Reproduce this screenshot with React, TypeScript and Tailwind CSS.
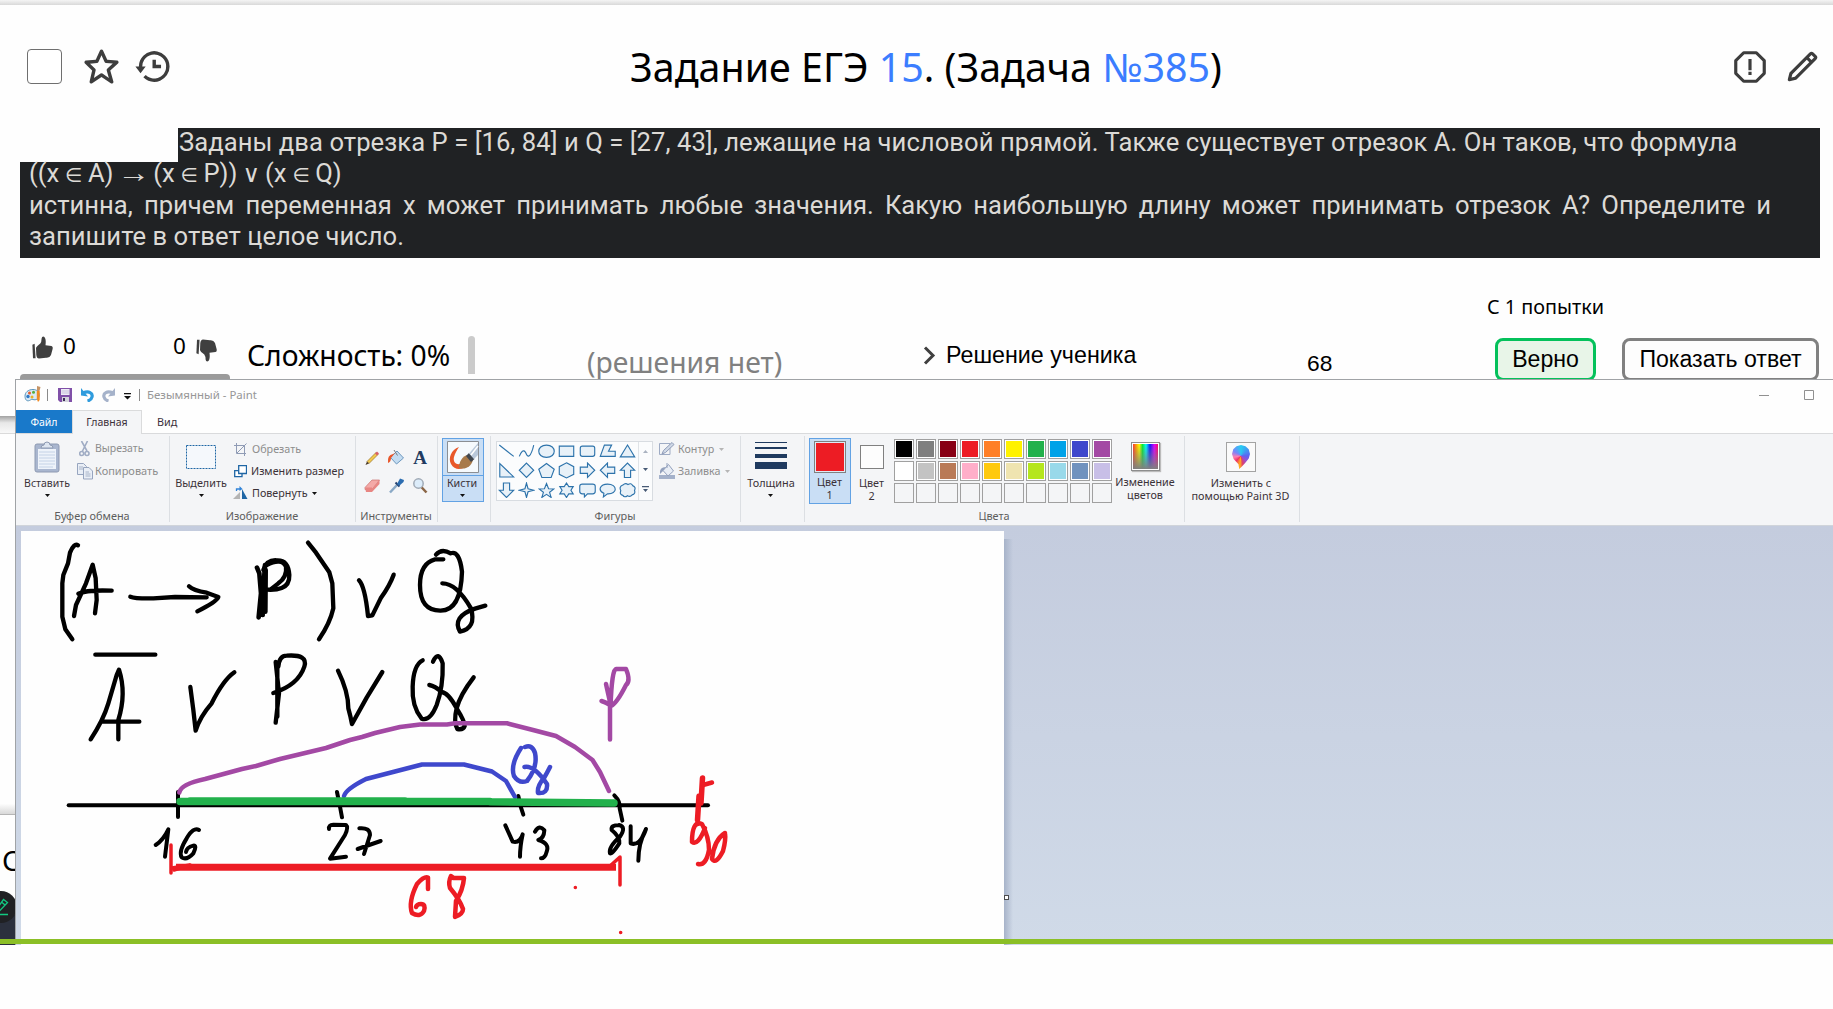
import type { ReactNode } from "react";
import { BiErrorAlt, BiHistory, BiPencil, BiStar } from "react-icons/bi";

const PALETTE = [
  "bg-[#000000]", "bg-[#7f7f7f]", "bg-[#880015]", "bg-[#ed1c24]", "bg-[#ff7f27]",
  "bg-[#fff200]", "bg-[#22b14c]", "bg-[#00a2e8]", "bg-[#3f48cc]", "bg-[#a349a4]",
  "bg-[#ffffff]", "bg-[#c3c3c3]", "bg-[#b97a57]", "bg-[#ffaec9]", "bg-[#ffc90e]",
  "bg-[#efe4b0]", "bg-[#b5e61d]", "bg-[#99d9ea]", "bg-[#7092be]", "bg-[#c8bfe7]",
  "", "", "", "", "", "", "", "", "", "",
];

const SHAPES = [
  "M1 2 L15 13",
  "M1 13 C3 8 5 6 7 9 C9 14 11 15 14 6 L15 2",
  "M8 2 C13 2 15.500 5 15.500 8 C15.500 11 13 14 8 14 C3 14 .5 11 .5 8 C.5 5 3 2 8 2Z",
  "M1 3 H15 V13 H1Z",
  "M3 3 H13 Q15 3 15 5 V11 Q15 13 13 13 H3 Q1 13 1 11 V5 Q1 3 3 3Z",
  "M5 2 H12 L9 8 H15.500 V13 H1Z",
  "M8 2 L15 13.500 H1Z",
  "M1.500 1.500 V14.500 H15Z",
  "M8 1 L15 8 L8 15 L1 8Z",
  "M8 1.500 L15.500 7 L12.500 15 H3.500 L.5 7Z",
  "M8 .8 L15 4.500 V12 L8 15.500 L1 12 V4.500Z",
  "M1 5 H8 V1 L15 8 L8 15 V11 H1Z",
  "M15 5 H8 V1 L1 8 L8 15 V11 H15Z",
  "M5 15 V8 H1 L8 1 L15 8 H11 V15Z",
  "M5 1 V8 H1 L8 15 L15 8 H11 V1Z",
  "M8 1 L9.500 6.500 L15 8 L9.500 9.500 L8 15 L6.500 9.500 L1 8 L6.500 6.500Z",
  "M8 1.500 L10 6.500 L15.200 6.700 L11 10 L12.500 15 L8 12 L3.500 15 L5 10 L.8 6.700 L6 6.500Z",
  "M8 1 L10.200 4.500 H14.500 L12.300 8 L14.500 11.500 H10.200 L8 15 L5.800 11.500 H1.500 L3.700 8 L1.500 4.500 H5.800Z",
  "M3 2 H13 Q15.500 2 15.500 4 V9 Q15.500 11.500 13 11.500 H8 L5 14.500 V11.500 H3 Q.5 11.500 .5 9 V4 Q.5 2 3 2Z",
  "M8 2 C18 2 18 12 8 11.500 L4 14.500 L4.500 11 C-2 8 1 2 8 2Z",
  "M3.500 3 Q6 .5 8.500 2.500 Q11.500 .5 13 3.500 Q16.500 5 14.800 8 Q16 11.500 12.500 12.500 Q10.500 15 8 13.300 Q5 15.500 3.500 13 Q0 12 1.500 8.500 Q-.5 4.500 3.500 3Z",
];

function Caret({ className = "text-[#111]" }: { className?: string }) {
  return (
    <svg className={className} width="5" height="3" viewBox="0 0 5 3" fill="currentColor">
      <path d="M0 0H5L2.500 3Z" />
    </svg>
  );
}

function Group({ width, label, children }: { width: string; label?: string; children: ReactNode }) {
  return (
    <section className={`${width} relative flex h-[91px] shrink-0 flex-col justify-between`}>
      <div className="flex items-start">{children}</div>
      <div className="h-[17px] pr-[2px] text-center text-[10.9px] leading-[16px] text-[#5d5d5d]">{label}</div>
      <div className="absolute top-[2px] right-0 h-[86px] w-px bg-[#dcdfe3]" />
    </section>
  );
}

function Thumb({ className }: { className?: string }) {
  return (
    <svg className={className} width="21" height="23" viewBox="0 0 21 23" fill="#3f3f3f">
      <path d="M.4 8.800 L2.600 7.700 L3.600 22.300 L1 22.300Z" />
      <path d="M4.300 19 L4 12 Q4.200 10.500 8.300 7.500 Q9.500 6 9.600 2.500 Q9.800 .6 11.300 .5 Q14.500 1.300 13.500 9.200 L19.500 10 Q21.200 10.500 20.600 13 L19 19 Q17.500 22.300 14 21.800 L7 22.500 Q4.800 22.500 4.300 19Z" />
    </svg>
  );
}

function El() {
  return <span className="inline-block w-[16px] text-center font-['DejaVu_Sans'] text-[20px] leading-[0px]"><span className="-mx-1">∈</span></span>;
}

function Header() {
  return (
    <header className="mt-[41px] flex h-[41px] items-center">
      <div className="ml-[27px] h-[35px] w-[35px] rounded-[4px] border border-[#6f6f6f] bg-white" />
      <BiStar className="ml-[19px] h-[41px] w-[41px] text-[#3d3d3d]" />
      <BiHistory className="ml-[10px] h-[41px] w-[41px] text-[#3d3d3d]" />
      <h1 className="mt-[1px] ml-[457px] w-[600px] font-['Noto_Sans',sans-serif] text-[39.4px] leading-[41px] whitespace-nowrap text-black">
        Задание ЕГЭ <span className="text-[#3b7dff]">15</span>. (Задача <span className="text-[#3b7dff]">№385</span>)
      </h1>
      <BiErrorAlt className="ml-[501px] h-[38px] w-[38px] text-[#3d3d3d]" />
      <BiPencil className="ml-[14px] h-[38px] w-[38px] text-[#3d3d3d]" />
    </header>
  );
}

function Problem() {
  return (
    <div className="mt-[41px] ml-[20px] h-[130px] w-[1800px] font-['Roboto',sans-serif] text-[25.6px] text-[#dcdad6]">
      <p className="ml-[158px] h-[34px] bg-[#202224] pl-px leading-[29px] tracking-[0.055px] whitespace-nowrap">
        Заданы два отрезка P = [16, 84] и Q = [27, 43], лежащие на числовой прямой. Также существует отрезок A. Он таков, что формула
      </p>
      <div className="h-[96px] bg-[#202224] pl-[9px]">
        <p className="mb-[3px] h-[25px] leading-[23px] whitespace-nowrap">
          ((x <El /> A){" "}
          <span className="inline-block w-[27px] origin-center scale-x-[1.22] text-center font-['Liberation_Sans'] text-[27px] leading-[0px]">→</span> (x <El /> P)){" "}
          <span className="inline-block w-[15px] text-center font-['DejaVu_Sans'] text-[24px] leading-[0px]"><span className="-mx-1">∨</span></span> (x <El /> Q)
        </p>
        <p className="w-[1742px] text-justify leading-[31.2px] [text-align-last:justify]">
          истинна, причем переменная x может принимать любые значения. Какую наибольшую длину может принимать отрезок A? Определите и
        </p>
        <p className="leading-[31.2px] tracking-[0.04px] whitespace-nowrap">запишите в ответ целое число.</p>
      </div>
    </div>
  );
}

function AnswerRow() {
  return (
    <div className="flex h-[122px] items-start whitespace-nowrap text-black">
      <div className="mt-[77px] ml-[20px] flex h-[45px] w-[210px] flex-col justify-between font-['Noto_Sans',sans-serif] text-[22.500px]">
        <div className="flex h-[27px] items-start">
          <Thumb className="mt-px ml-[12px]" />
          <span className="ml-[10px] w-[13px] leading-[22px]">0</span>
          <span className="ml-[97px] w-[13px] leading-[22px]">0</span>
          <Thumb className="mt-[4px] ml-[10px] -scale-y-100" />
        </div>
        <div className="h-[6px] rounded-t-[4px] bg-[#9b9b9b]" />
      </div>
      <div className="mt-[75px] ml-[17px] w-[221px] font-['Noto_Sans',sans-serif] text-[28.250px] leading-[44px]">Сложность: 0%</div>
      <div className="mt-[78px] h-[38px] w-[7px] rounded-t-[4px] bg-[#cbcbcb]" />
      <div className="mt-[82px] ml-[112px] w-[199px] font-['Noto_Sans',sans-serif] text-[28.300px] leading-[44px] text-[#808080]">(решения нет)</div>
      <svg className="mt-[88px] ml-[137px]" width="13" height="19" viewBox="0 0 13 19" fill="none" stroke="#3f3f3f" strokeWidth="3">
        <path d="M2 1.500 L10 9.500 L2 17.500" />
      </svg>
      <div className="mt-[85px] ml-[10px] w-[200px] font-['Liberation_Sans',sans-serif] text-[23.250px] leading-[24px]">Решение ученика</div>
      <div className="mt-[93px] ml-[161px] w-[30px] font-['Liberation_Sans',sans-serif] text-[22.800px] leading-[24px]">68</div>
      <div className="ml-[149px]">
        <div className="mt-[35px] ml-px font-['Noto_Sans',sans-serif] text-[19.800px] leading-[27px]">С 1 попытки</div>
        <div className="mt-[18px] ml-[9px] flex h-[43px] font-['Liberation_Sans',sans-serif] text-[23.100px] leading-[37px]">
          <div className="w-[101px] rounded-[8px] border-[3px] border-[#04c15b] bg-[#e8f5e8] text-center">Верно</div>
          <div className="ml-[26px] w-[197px] rounded-[8px] border-[3px] border-[#808080] bg-[#fdfdfd] text-center">Показать ответ</div>
        </div>
      </div>
    </div>
  );
}

function PageEdge() {
  return (
    <div className="mt-[36px] flex h-[529px] w-[16px] flex-col">
      <div className="h-[18px] shrink-0 border-b border-[#dadada] bg-linear-to-b from-[#a2a2a2] via-[#e8e8e8] via-40% to-[#f8f8f8]" />
      <div className="mt-[370px] h-[11px] shrink-0 border-b border-[#b5b5b5] bg-linear-to-b from-[#fdfdfd] to-[#d8d8d8]" />
      <div className="mt-[26px] h-[38px] shrink-0 overflow-hidden pl-[2px] font-['Noto_Sans',sans-serif] text-[28px] leading-[38px]">С</div>
      <div className="relative mt-[12px] h-[54px] shrink-0 overflow-hidden">
        <div className="mt-[24px] h-[30px] bg-[#2b303d]" />
        <svg className="absolute top-0 left-0" width="17" height="32" viewBox="0 0 17 32" fill="none">
          <circle cx="1" cy="16" r="16" fill="#202124" />
          <path d="M-4 19 L3.500 8.500 L7.500 11.500 L0 19.500 L-4 20 M1.500 11 L5 14 M-6 23.500 H8" stroke="#12c981" strokeWidth="1.300" />
        </svg>
      </div>
    </div>
  );
}

function TitleBar() {
  return (
    <div className="flex h-[30px] items-center pr-[19px]">
      <svg className="ml-[8px]" width="18" height="18" viewBox="0 0 18 18">
        <path d="M9 3.500 C4 3.500 .8 6.500 1 10.500 C1.200 14 3 15.500 5.500 14.500 C7 13.800 7.500 12.800 9 13.500 C11.500 14.500 15.500 13 15.300 8.800 C15.200 5.500 12.500 3.500 9 3.500Z" fill="#d9eaf5" stroke="#5a94bc" />
        <circle cx="4" cy="10.500" r="1.700" fill="#3079c5" /><circle cx="5.500" cy="7" r="1.500" fill="#e85b2c" /><circle cx="9.500" cy="6.300" r="1.500" fill="#59ad3d" /><circle cx="8" cy="11" r="1.500" fill="#e9b327" />
        <path d="M13 0 L16.500 1 L15.500 5 H13Z" fill="#c59466" /><path d="M12.800 5 H15.700 V14 L14 16 L12.800 13Z" fill="#f18a22" />
      </svg>
      <div className="ml-[5px] h-[12px] w-px bg-[#8a8a8a]" />
      <svg className="ml-[10px]" width="14" height="14" viewBox="0 0 14 14">
        <path d="M0 0H14V14H2L0 12Z" fill="#8050a8" /><path d="M3 1H11.500V7H3Z" fill="#eeecf6" /><path d="M3.500 3H11M3.500 5H11" stroke="#b8b3cf" strokeWidth=".7" /><path d="M4 9H11V14H4Z" fill="#d4d4dc" /><path d="M5 10H7V13H5Z" fill="#3c2c58" />
      </svg>
      <svg className="ml-[9px]" width="13" height="14" viewBox="0 0 13 14" fill="none">
        <path d="M2 5 C8 2.500 12 5 11 9 C10.500 11.500 9 12.300 6.500 13" stroke="#2e9bdd" strokeWidth="3.200" /><path d="M0 0 L7 8.500 L0 7.500Z" fill="#2e9bdd" />
      </svg>
      <svg className="ml-[8px]" width="13" height="14" viewBox="0 0 13 14" fill="none">
        <path d="M11 5 C5 2.500 1 5 2 9 C2.500 11.500 4 12.300 6.500 13" stroke="#a5b2ca" strokeWidth="3.200" /><path d="M13 0 L6 8.500 L13 7.500Z" fill="#a5b2ca" />
      </svg>
      <svg className="mt-[3px] ml-[9px]" width="7" height="7" viewBox="0 0 7 7"><path d="M0 0H7V1.200H0ZM0 3H7L3.500 6.500Z" fill="#111" /></svg>
      <div className="ml-[8px] h-[12px] w-px bg-[#8a8a8a]" />
      <div className="ml-[7px] text-[11.450px] leading-[16px] whitespace-nowrap text-[#979797]">Безымянный - Paint</div>
      <svg className="ml-auto" width="55" height="10" viewBox="0 0 55 10" fill="none" stroke="#909090">
        <path d="M0 5.500H10M45.500 .5H54.500V9.500H45.500Z" />
      </svg>
    </div>
  );
}

function Tabs() {
  return (
    <div className="flex h-[24px] items-stretch text-[10.500px] leading-[24px]">
      <div className="w-[56px] border-b border-[#d9dadc] bg-[#1979ca] text-center text-white">Файл</div>
      <div className="w-[70px] border-x border-t border-[#dadbdc] bg-[#f4f5f7] text-center leading-[23px] text-[#3b2f3a]">Главная</div>
      <div className="grow border-b border-[#d9dadc] pl-[15px] text-[10.800px] text-[#3b2f3a]">Вид</div>
    </div>
  );
}

function ClipboardGroup() {
  return (
    <Group width="w-[154px]" label="Буфер обмена">
      <div className="mt-[7px] flex w-[62px] flex-col items-center">
        <svg width="26" height="32" viewBox="0 0 26 32">
          <rect x="1" y="3" width="24" height="28" rx="2" fill="#a9b6cf" stroke="#8e9ab2" />
          <path d="M4 8 H22 V28 H4Z" fill="#eef3fa" /><path d="M5 11H21M5 14H21M5 17H21M5 20H21M5 23H21M5 26H19" stroke="#c4d2e6" />
          <path d="M7 7 Q7 4 10 4 Q10 1 13 1 Q16 1 16 4 Q19 4 19 7Z" fill="#dde5f0" stroke="#8e9ab2" />
        </svg>
        <span className="mt-[2px] text-[10.500px] leading-[16px]">Вставить</span>
        <div className="mt-[3px]"><Caret /></div>
      </div>
      <div className="mt-[6px] ml-[-4px] flex flex-col gap-[4px] text-[#8d8d8d]">
        <div className="flex h-[18px] items-center">
          <svg className="ml-[5px]" width="12" height="16" viewBox="0 0 12 16" fill="none" stroke="#a0acc4" strokeWidth="1.600"><path d="M2.500 0 L8 10 M8.500 0 L3.500 10" /><circle cx="2.700" cy="12.500" r="2" /><circle cx="8" cy="12.500" r="2" /></svg>
          <span className="ml-[4px] text-[10.500px]">Вырезать</span>
        </div>
        <div className="flex h-[18px] items-center">
          <svg className="ml-[3px]" width="16" height="17" viewBox="0 0 16 17" fill="#e9eef6" stroke="#97a5bf"><path d="M.5 .5H6.500L9.500 3.500V11.500H.5Z" /><path d="M6.500 4.500H12L15.500 8V16H6.500Z" /><path d="M2 4H6M2 6H6M8.500 9H12M8.500 11H13.500M8.500 13H13.500" strokeWidth=".8" /></svg>
          <span className="ml-[2px] text-[11px]">Копировать</span>
        </div>
      </div>
    </Group>
  );
}

function ImageGroup() {
  return (
    <Group width="w-[186px]" label="Изображение">
      <div className="mt-[11px] flex w-[62px] flex-col items-center">
        <svg width="30" height="24" viewBox="0 0 30 24"><path d="M.5 .5H29.500V23.500H.5Z" fill="#f5f8fc" stroke="#1f66a5" strokeDasharray="2 1" /></svg>
        <span className="mt-[6px] text-[10.800px] leading-[16px]">Выделить</span>
        <div className="mt-[3px]"><Caret /></div>
      </div>
      <div className="mt-[6px] flex flex-col gap-[4px] text-[10.750px]">
        <div className="flex h-[18px] items-center text-[#8d8d8d]">
          <svg className="ml-[2px]" width="13" height="13" viewBox="0 0 13 13" fill="none" stroke="#8f9bb5"><path d="M2.500 0V10.500H12M0 2.500H10.500V13M3 10L12.500 .5" /></svg>
          <span className="ml-[5px]">Обрезать</span>
        </div>
        <div className="flex h-[18px] items-center">
          <svg className="ml-[2px]" width="13" height="13" viewBox="0 0 13 13" fill="#fff" stroke="#1f66a5" strokeWidth="1.300"><path d="M.7 5.700H8V11.700H.7Z" /><path d="M4.700 .7H12.500V8.500H4.700Z" /></svg>
          <span className="ml-[4px]">Изменить размер</span>
        </div>
        <div className="flex h-[18px] items-center">
          <svg className="ml-px" width="15" height="14" viewBox="0 0 15 14"><path d="M0 13 L7 6 V13Z" fill="#b4b4b4" /><path d="M9 13 V3 L14.500 13Z" fill="#1f66a5" /><path d="M3.500 5 V3 H7" fill="none" stroke="#2f82d8" strokeWidth="1.300" /><path d="M6.500 0 L9.500 3 L6.500 5Z" fill="#2f82d8" /></svg>
          <span className="ml-[4px]">Повернуть</span>
          <div className="ml-[4px]"><Caret /></div>
        </div>
      </div>
    </Group>
  );
}

function ToolsGroup() {
  return (
    <Group width="w-[82px]" label="Инструменты">
      <div className="mt-[15px] ml-[7px] grid grid-cols-3 gap-x-[6px] gap-y-[10px]">
        <svg width="18" height="18" viewBox="0 0 18 18"><path d="M4 12.500 L13 3.500 L15 5.500 L6 14.500Z" fill="#f2c94c" stroke="#9a7230" strokeWidth=".7" /><path d="M12 4.500 L14 2.500 L16 4.500 L14 6.500Z" fill="#d9606a" /><path d="M2.500 16 L4 12.500 L6 14.500Z" fill="#4a3a28" /></svg>
        <svg width="18" height="18" viewBox="0 0 18 18"><path d="M3.500 8.500 L10 2 L16.500 9 L9.500 15Z" fill="#c4dcf1" stroke="#6e98bf" /><path d="M7 1 L10.500 6.500" stroke="#777" /><path d="M1 14 Q0 6 6 5 L8 4 L4 9 Q4 13 1 14Z" fill="#e8562a" /></svg>
        <div className="text-center font-['Liberation_Serif',serif] text-[19px] leading-[18px] font-bold text-[#213a60]">A</div>
        <svg width="18" height="18" viewBox="0 0 18 18"><path d="M2 10.500 L9 3 H16.500 L9 12.500 H2Z" fill="#f4a9a7" stroke="#c9706e" strokeWidth=".7" /><path d="M2 10.500 H9 V15 H3Z M9 12 L16.500 3 V7 L9 15Z" fill="#e88683" /></svg>
        <svg width="18" height="18" viewBox="0 0 18 18"><path d="M3 15.500 L10 8" stroke="#8aa9c6" strokeWidth="2.500" /><path d="M8.500 5.500 L12.500 9.500" stroke="#233f6c" strokeWidth="2" /><path d="M10 7 L13 1.500 L17 3 L16.500 5 L12 9Z" fill="#2b6cb0" /></svg>
        <svg width="18" height="18" viewBox="0 0 18 18"><circle cx="7.500" cy="6.500" r="4.700" fill="#dcecfa" stroke="#a0aab6" strokeWidth="1.500" /><path d="M10.800 10.500 L15.500 15.500" stroke="#8a6546" strokeWidth="2.500" /></svg>
      </div>
    </Group>
  );
}

function BrushGroup() {
  return (
    <Group width="w-[53px]">
      <div className="mt-[4px] ml-[4px] flex h-[64px] w-[42px] flex-col items-center border border-[#62a2e4] bg-[#c9def5]">
        <svg className="mt-[2px]" width="32" height="32" viewBox="0 0 32 32">
          <path d="M.5 .5H31.500V31.500H.5Z" fill="#f6fafd" stroke="#8b8f94" />
          <path d="M12 6 C4 9 1 17 4 23 C7 29 14 29 18 26 L13 23 C8 24 6 20 7 16 C8 12 10 9 12 6Z" fill="#e8592b" />
          <path d="M12 27 C12 21 15 15 21 14 L26 19 C24 26 18 29 12 27Z" fill="#a87a4a" /><path d="M19 15 L22 12 L27.500 18 L24 21Z" fill="#41474f" /><path d="M22 12.500 L31 2 V14 L27 18Z" fill="#b9c8da" /><path d="M24 14 L31 5" stroke="#fff" strokeWidth="1.500" />
        </svg>
        <div className="mt-[2px] h-px w-full bg-[#62a2e4]" />
        <span className="pr-[2px] text-[10.700px] leading-[15px]">Кисти</span>
        <div className="mt-[3px] pr-[2px]"><Caret /></div>
      </div>
    </Group>
  );
}

function ShapesGroup() {
  return (
    <Group width="w-[250px]" label="Фигуры">
      <div className="mt-[7px] ml-[5px] flex h-[60px] w-[157px] border border-[#d8dce1] bg-[#fbfcfd]">
        <div className="grid w-[141px] shrink-0 grid-cols-7">
          {SHAPES.map((d, i) => (
            <svg key={i} className="mt-[1px] ml-[1px]" width="17" height="16.500" viewBox="0 0 16 16" fill={i < 2 ? "none" : "#e8f1f8"} stroke="#2d73ab" strokeWidth="1.100"><path d={d} /></svg>
          ))}
        </div>
        <div className="flex w-[14px] flex-col items-center justify-around border-l border-[#dfe3e7]">
          <svg width="5" height="3" viewBox="0 0 5 3"><path d="M0 3H5L2.500 0Z" fill="#aab2c0" /></svg>
          <Caret className="text-[#475a75]" />
          <svg width="7" height="6" viewBox="0 0 7 6"><path d="M0 0H7V1.200H0ZM1 3H6L3.500 6Z" fill="#475a75" /></svg>
        </div>
      </div>
      <div className="mt-[6px] ml-[6px] flex flex-col gap-[4px] text-[10.700px] text-[#8d8d8d]">
        <div className="flex h-[18px] items-center">
          <svg width="16" height="14" viewBox="0 0 16 14" fill="none"><path d="M.5 1.500H11V12.500H.5Z" stroke="#9eabc4" /><path d="M3 12 L4.500 8.500 L13 .5 L15 2.500 L6.500 10.500Z" fill="#cfd8e6" stroke="#8f9cb8" /></svg>
          <span className="ml-[3px]">Контур</span><div className="ml-[5px]"><Caret className="text-[#b5b5b5]" /></div>
        </div>
        <div className="flex h-[18px] items-center">
          <svg width="16" height="16" viewBox="0 0 16 16"><path d="M0 12H16V16H0Z" fill="#a4b1ca" /><path d="M4 7.500 L9.500 1.500 L14.500 8 L9 13Z" fill="#e8edf5" stroke="#93a1bd" /><path d="M1 11 Q0 4 7 4 L4 8Z" fill="#93a1bd" /><path d="M8 0V5" stroke="#93a1bd" /></svg>
          <span className="ml-[3px]">Заливка</span><div className="ml-[5px]"><Caret className="text-[#b5b5b5]" /></div>
        </div>
      </div>
    </Group>
  );
}

function ColorsGroup() {
  return (
    <Group width="w-[380px]" label="Цвета">
      <div className="mt-[4px] ml-[4px] flex h-[66px] w-[42px] flex-col items-center border border-[#62a2e4] bg-[#c9def5] pr-px text-[10.800px] leading-[13px]">
        <div className="mt-[2px] mb-[2px] h-[32px] w-[32px] border border-[#808080] bg-[#ed1c24] shadow-[inset_0_0_0_1px_#dfeaf6]" />
        <span>Цвет</span><span>1</span>
      </div>
      <div className="mt-[11px] flex w-[42px] flex-col items-center pr-px text-[10.800px] leading-[13px]">
        <div className="mb-[7px] h-[24px] w-[24px] border border-[#808080] bg-[#fdfdfd]" />
        <span>Цвет</span><span>2</span>
      </div>
      <div className="mt-[5px] ml-px grid grid-cols-10 gap-[2px]">
        {PALETTE.map((c, i) => (
          <div key={i} className={`h-[20px] w-[20px] border border-[#a0a0a0] p-px ${i < 20 ? "bg-white" : "bg-[#f4f5f7]"}`}>
            <div className={`h-full w-full ${c}`} />
          </div>
        ))}
      </div>
      <div className="mt-[8px] flex w-[66px] flex-col items-center text-center text-[10.750px] leading-[13px]">
        <div className="mb-[5px] h-[29px] w-[29px] border border-[#8d8d8d] bg-white p-px shadow-[1px_1px_1px_#bbb]">
          <div className="relative h-full w-full bg-[linear-gradient(90deg,#f33,#fa0_14%,#ff0_25%,#0e3_38%,#0ff_52%,#11f_68%,#d0f_85%,#f06)]">
            <div className="absolute inset-0 bg-linear-to-b from-transparent to-[#808080]" />
          </div>
        </div>
        <span>Изменение</span><span>цветов</span>
      </div>
    </Group>
  );
}

function Ribbon() {
  return (
    <div className="flex h-[92px] border-b border-[#d0d4da] bg-[#f4f5f7] text-[#3b3238]">
      <ClipboardGroup />
      <ImageGroup />
      <ToolsGroup />
      <BrushGroup />
      <ShapesGroup />
      <Group width="w-[64px]">
        <div className="mt-[8px] flex w-[60px] flex-col items-center">
          <svg width="32" height="28" viewBox="0 0 32 28" fill="#1f3a5f"><path d="M0 0H32V1H0ZM0 5H32V7H0ZM0 12H32V16H0ZM0 20H32V27H0Z" /></svg>
          <span className="mt-[5px] text-[10.850px] leading-[16px]">Толщина</span>
          <div className="mt-[3px] pr-[2px]"><Caret /></div>
        </div>
      </Group>
      <ColorsGroup />
      <Group width="w-[115px]">
        <div className="mt-[8px] flex w-[112px] flex-col items-center text-[10.850px] leading-[13px] whitespace-nowrap">
          <div className="mb-[4px] flex h-[30px] w-[30px] items-center justify-center border border-[#a3a3a3] bg-[#fafafa]">
            <div className="h-[24px] w-[18px] bg-[conic-gradient(from_0deg_at_50%_45%,#26cdf2,#5b63f2_25%,#9a4fd0_38%,#e0406a_47%,#ffb01f_52%,#ee3167_62%,#ff7fb0_72%,#7b83fa_84%,#26cdf2)] [clip-path:polygon(50%_0%,75%_5%,93%_18%,100%_37%,93%_56%,72%_76%,55%_90%,40%_100%,36%_80%,9%_58%,0%_37%,7%_18%,25%_5%)]" />
          </div>
          <span>Изменить с</span><span className="pr-px">помощью Paint 3D</span>
        </div>
      </Group>
    </div>
  );
}

function Drawing() {
  return (
    <svg width="983" height="414" viewBox="21 531 983 414" fill="none" strokeLinecap="round" strokeLinejoin="round">
      <g transform="translate(0 740) scale(.33333)" stroke="#000" strokeWidth="12">
        <path d="M206 196 H2124" />
        <path d="M534 156 V231 M1011 156 L1020 200 L1026 232" />
        <path d="M467 315 Q490 300 505 268 L495 350 M597 270 Q580 260 560 295 Q535 335 545 352 Q560 362 580 340 Q592 315 580 317 Q560 322 558 336" />
        <path d="M987 267 Q985 255 1000 254 L1038 255 Q1046 262 1035 285 L990 356 L1038 350 M1078 265 Q1110 262 1110 285 L1092 342 M1073 327 L1142 303" />
      </g>
      <g transform="translate(0 520) scale(.33333)" stroke="#000" strokeWidth="13">
        <path d="M234 76 Q222 68 210 98 L204 130 L190 165 L187 190 V290 L196 328 L217 358" />
        <path d="M222 288 L228 255 L258 190 L278 134 L287 175 L290 240 L285 280 M235 221 Q260 209 335 212" />
        <path d="M391 230 Q405 236 460 235 L525 231 L620 232 M567 199 Q580 212 620 218 L655 231 Q650 245 592 274" />
        <path d="M771 143 L778 160 L783 220 L776 292 M795 135 L786 270 M797 150 L796 275 M783 230 L788 285" strokeWidth="14" />
        <path d="M790 150 Q800 119 830 121 Q865 119 868 165 Q869 195 845 204 Q825 212 790 208 M800 135 Q845 112 858 140 Q862 170 835 190 L812 208" />
        <path d="M924 68 L948 98 L988 157 L997 190 L1000 265 Q990 310 957 358" />
        <path d="M1077 181 Q1095 200 1104 288 L1117 286 L1142 235 Q1170 195 1181 164" />
        <path d="M1330 118 H1305 Q1260 130 1260 195 Q1260 273 1322 272 Q1383 272 1386 155 Q1378 90 1352 100 Q1325 84 1308 104 M1327 190 Q1370 190 1413 265 Q1430 325 1380 335 Q1355 290 1425 266 L1456 257" />
        <path d="M286 404 H466 M272 658 Q310 600 325 550 L350 465 L357 449 Q380 520 355 600 V658 M305 605 H418" />
        <path d="M571 501 L580 570 L587 632 Q600 590 635 550 Q670 480 703 457" />
        <path d="M827 426 L837 520 L827 608 M832 430 V590 M835 440 Q838 407 860 407 Q925 402 913 440 Q895 495 820 519" />
        <path d="M1014 452 Q1045 515 1045 565 Q1052 590 1056 612 L1100 533 L1147 456" />
        <path d="M1268 421 Q1240 435 1238 500 Q1235 560 1265 596 Q1290 605 1310 555 Q1330 500 1328 430 Q1315 390 1299 425 M1288 495 Q1305 498 1325 516 Q1345 518 1370 565 Q1395 605 1394 618 Q1390 630 1372 627 Q1360 605 1370 565 Q1380 525 1421 472" />
      </g>
      <g transform="translate(320 650) scale(.33333)" stroke="#000" strokeWidth="12">
        <path d="M595 438 L602 470 L610 494 M883 436 Q902 455 899 475 L907 512" />
        <path d="M556 526 L578 575 Q600 580 608 553 Q600 590 600 620 M645 545 Q658 522 673 541 Q672 565 655 570 Q690 580 680 605 Q675 625 663 625" />
        <path d="M897 525 Q872 525 875 540 Q900 560 898 580 Q875 615 870 610 Q865 590 900 560 Q920 530 897 525 M932 529 L932 580 Q960 590 978 537 Q955 580 955 632" />
      </g>
      <g stroke="#a349a4" strokeWidth="4.500">
        <path d="M179.300 792.500 Q181 784 205 779 L242 769 L256 766 L280 759 L326 748 L350 740 L362 737 L375 733 L400 727 L420 724.500 L447 724.500 L455 723.300 H507 L533 730 L556 736 L575 747 L592.500 760 L600 772 L609 791" />
        <path d="M610 739.500 V702 L606 684 M601.500 701 Q608 703 610.500 706 Q612 669 616 669 H626 Q631 681 626 685 Q617 703 611 706" />
      </g>
      <g stroke="#3f48cc" strokeWidth="4.500">
        <path d="M344 796 Q346 789 366 779 L422 764.500 H464 L492 771.500 L506 781 L515 797" />
        <path d="M521 748 Q510 765 514 776 Q519 784 527 781 Q538 767 535 753 Q532 744 525 747 M524.500 767 Q534 765 547 784 Q548 794 538 793 Q537 786 544 778 Q547 773 550 767" />
      </g>
      <path d="M180 801.500 H490 M190 801 H405 M490 801.700 L614 803" stroke="#22b14c" strokeWidth="7.500" />
      <g stroke="#ed1c24" strokeWidth="3.500">
        <path d="M171 845 V873" /><path d="M176 867.300 H616" strokeWidth="7" strokeLinecap="butt" /><path d="M172 868 L190 865 L174 870" /><path d="M620 885 V857 L610 866" />
        <path d="M428 889 V877.500 Q424 876 417 884 Q408 902 412 913 Q420 918 424 911 Q426 904 421 904 Q417 904 416 907" strokeWidth="4.500" />
        <path d="M453 878 H464 Q463 890 456 901 L455 917 Q463 914 463 909 Q460 900 450 888 Q448 882 451 876 L454 878" strokeWidth="4.500" />
        <path d="M702.500 778 L701 803 M699 796 L697.500 820" strokeWidth="5.500" /><path d="M703 785 L712 782.500" strokeWidth="4.500" />
        <path d="M705 828 Q698 846 692 842 Q692 820 702 824 Q709 837 709 850 Q706 866 698 864 M725 833 Q714 840 712 859 Q716 865 723 851 Q726 840 725 833" strokeWidth="4.500" />
        <path d="M575.300 887.500H575.400M620.600 932.500H620.700" />
      </g>
    </svg>
  );
}

function PaintWindow() {
  return (
    <div className="absolute top-[379px] left-[15px] flex h-[566px] w-[1818px] flex-col border-t border-l border-[#a0a3a6] bg-[#fefefe] font-['Noto_Sans',sans-serif]">
      <TitleBar />
      <Tabs />
      <Ribbon />
      <div className="flex grow bg-linear-to-b from-[#c4ccde] to-[#d0dae8] pt-[5px] pl-[5px]">
        <div className="h-[414px] w-[983px] shrink-0 bg-[#fefefe]"><Drawing /></div>
        <div className="mt-[8px] w-[9px] bg-linear-to-r from-[#a7b3c9] to-transparent">
          <div className="mt-[356px] h-[5px] w-[5px] border border-[#4c4c4c] bg-white" />
        </div>
      </div>
    </div>
  );
}

export default function App() {
  return (
    <main className="relative flex h-[1009px] w-[1833px] flex-col overflow-hidden bg-[#fefefe]">
      <div className="h-[5px] shrink-0 bg-linear-to-b from-[#f4f4f4] to-[#d9d9d9]" />
      <Header />
      <Problem />
      <AnswerRow />
      <PageEdge />
      <PaintWindow />
      <div className="absolute top-[939px] left-0 h-[5px] w-full bg-[#8bbf26]" />
    </main>
  );
}
